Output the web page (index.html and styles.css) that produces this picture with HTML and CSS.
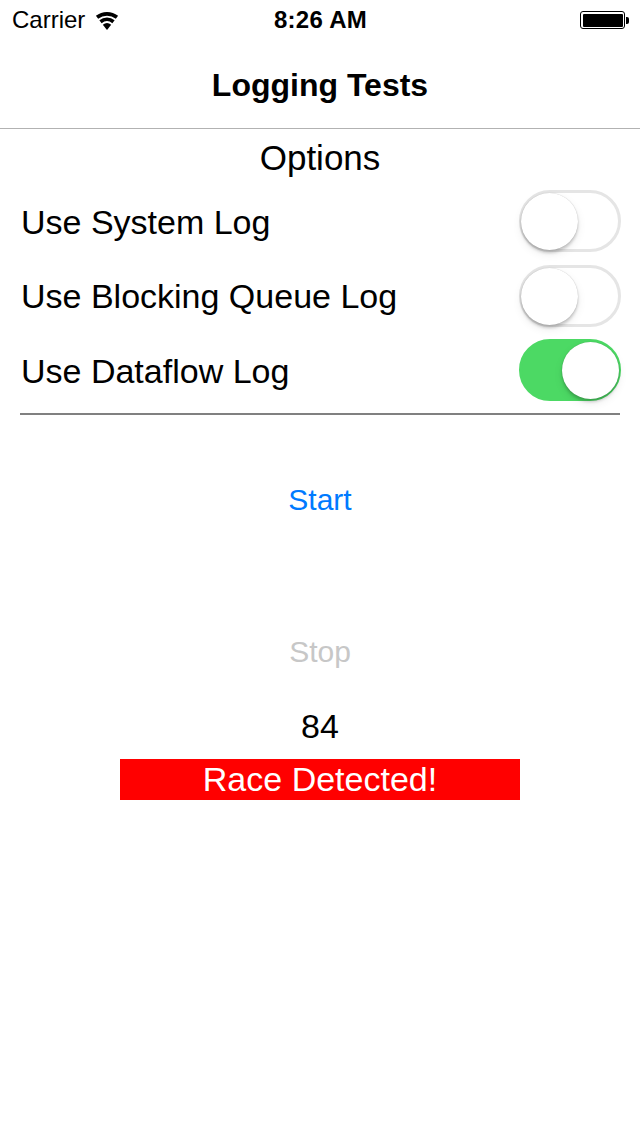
FILE: index.html
```html
<!DOCTYPE html>
<html>
<head>
<meta charset="utf-8">
<link rel="stylesheet" href="styles.css">
</head>
<body>
<div class="screen">
  <div class="status">
    <div class="status-left">
      <span class="carrier">Carrier</span>
      <svg class="wifi" width="24" height="20" viewBox="0 0 24 20">
        <path d="M0.91 4.82 A18 18 0 0 1 23.09 4.82 L20.81 7.73 A14.3 14.3 0 0 0 3.19 7.73 Z" fill="#000"/>
        <path d="M4.36 9.23 A12.4 12.4 0 0 1 19.64 9.23 L17.36 12.14 A8.7 8.7 0 0 0 6.64 12.14 Z" fill="#000"/>
        <path d="M12 19 L7.81 13.64 A6.8 6.8 0 0 1 16.19 13.64 Z" fill="#000"/>
      </svg>
    </div>
    <div class="time">8:26 AM</div>
    <div class="status-right">
      <div class="battery"><div class="battery-fill"></div></div>
      <div class="battery-nub"></div>
    </div>
  </div>
  <div class="navbar">Logging Tests</div>
  <div class="content">
    <div class="section-title">Options</div>
    <div class="options">
      <div class="row">
        <span class="row-label">Use System Log</span>
        <div class="switch"><div class="knob"></div></div>
      </div>
      <div class="row">
        <span class="row-label">Use Blocking Queue Log</span>
        <div class="switch"><div class="knob"></div></div>
      </div>
      <div class="row">
        <span class="row-label">Use Dataflow Log</span>
        <div class="switch on"><div class="knob"></div></div>
      </div>
    </div>
    <div class="divider"></div>
    <div class="btn start">Start</div>
    <div class="btn stop">Stop</div>
    <div class="count">84</div>
    <div class="race">Race Detected!</div>
  </div>
</div>
</body>
</html>
```
FILE: styles.css
```css
html, body {
  margin: 0;
  padding: 0;
  background: #fff;
}
body {
  font-family: "Liberation Sans", Arial, Helvetica, sans-serif;
  color: #000;
}
.screen {
  width: 640px;
  height: 1136px;
  overflow: hidden;
  background: #fff;
}
.status {
  height: 40px;
  display: flex;
  align-items: center;
  justify-content: space-between;
  padding: 0 11px 0 12px;
}
.status-left {
  display: flex;
  align-items: center;
  gap: 10px;
  width: 200px;
}
.carrier {
  font-size: 24px;
  line-height: 40px;
}
.wifi {
  display: block;
  margin-top: 1px;
}
.time {
  font-size: 24px;
  font-weight: bold;
  line-height: 40px;
  letter-spacing: 0.3px;
}
.status-right {
  width: 200px;
  display: flex;
  justify-content: flex-end;
  align-items: center;
}
.battery {
  width: 45px;
  height: 18px;
  box-sizing: border-box;
  border: 1.5px solid #000;
  border-radius: 3px;
  padding: 1.5px;
}
.battery-fill {
  width: 100%;
  height: 100%;
  background: #000;
  border-radius: 1px;
}
.battery-nub {
  width: 3px;
  height: 7px;
  background: #000;
  border-radius: 0 2px 2px 0;
  margin-left: 1px;
}
.navbar {
  height: 86px;
  padding-top: 2px;
  border-bottom: 1px solid #b2b2b2;
  display: flex;
  align-items: center;
  justify-content: center;
  font-size: 32px;
  font-weight: bold;
}
.content {
  display: flex;
  flex-direction: column;
  align-items: center;
  padding: 0 20px;
}
.section-title {
  margin-top: 9px;
  font-size: 35px;
  line-height: 40px;
  height: 40px;
  text-align: center;
}
.options {
  align-self: stretch;
  display: flex;
  flex-direction: column;
  gap: 12.5px;
  margin-top: 12px;
}
.row {
  height: 62px;
  display: flex;
  align-items: center;
  justify-content: space-between;
}
.row-label {
  font-size: 34px;
  padding-left: 1px;
  padding-top: 2px;
}
.switch {
  width: 102px;
  height: 62px;
  box-sizing: border-box;
  border-radius: 31px;
  border: 3px solid #e5e5e5;
  background: #fff;
  position: relative;
  margin-right: -1px;
}
.knob {
  position: absolute;
  top: 0px;
  left: -1px;
  width: 57px;
  height: 57px;
  border-radius: 50%;
  background: #fff;
  box-shadow: 0 3px 3px rgba(0,0,0,0.18), 0 0 1px rgba(0,0,0,0.25), 0 4px 10px rgba(0,0,0,0.08);
}
.switch.on {
  background: #4cd964;
  border-color: #4cd964;
}
.switch.on .knob {
  left: auto;
  right: -1px;
}
.divider {
  align-self: stretch;
  height: 2px;
  background: #808080;
  margin-top: 12px;
}
.btn {
  font-size: 30px;
  line-height: 60px;
  height: 60px;
  text-align: center;
}
.start {
  color: #007aff;
  margin-top: 55px;
}
.stop {
  color: #c7c7c7;
  margin-top: 92px;
}
.count {
  font-size: 34px;
  line-height: 40px;
  height: 40px;
  margin-top: 24px;
}
.race {
  width: 400px;
  height: 41px;
  background: #ff0000;
  color: #fff;
  font-size: 34px;
  line-height: 41px;
  text-align: center;
  margin-top: 13px;
}
```
